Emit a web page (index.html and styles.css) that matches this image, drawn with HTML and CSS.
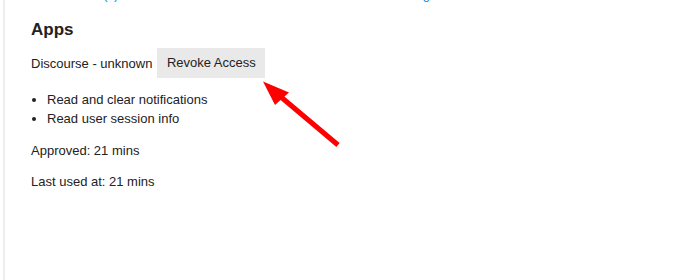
FILE: index.html
```html
<!DOCTYPE html>
<html>
<head>
<meta charset="utf-8">
<link rel="stylesheet" href="styles.css">
</head>
<body>
<div class="page">
  <div class="panel">
    <p class="intro"><a href="#">Linked client(s) that are authorized to access this account while using the site</a></p>
    <h2 class="title">Apps</h2>
    <div class="app-row">
      <span class="app-name">Discourse - unknown</span>
      <button class="btn">Revoke Access</button>
    </div>
    <ul class="scopes">
      <li>Read and clear notifications</li>
      <li>Read user session info</li>
    </ul>
    <p class="meta">Approved: 21 mins</p>
    <p class="meta">Last used at: 21 mins</p>
  </div>
  <svg class="arrow" width="100" height="80" viewBox="0 0 100 80">
    <line x1="85" y1="69" x2="28" y2="21" stroke="#ff0000" stroke-width="5"/>
    <polygon points="10,5.5 36,16.5 22,29" fill="#ff0000"/>
  </svg>
</div>
</body>
</html>
```
FILE: styles.css
```css
html, body {
  margin: 0;
  padding: 0;
  background: #fff;
}
body {
  font-family: "Liberation Sans", Arial, sans-serif;
  font-size: 13px;
  color: #222;
}
.page {
  position: relative;
  width: 690px;
  height: 280px;
  overflow: hidden;
}
.panel {
  margin-left: 3px;
  border-left: 2px solid #eeeeee;
  height: 280px;
  padding: 1px 0 0 26px;
  box-sizing: border-box;
}
.intro {
  margin: -14px 0 0;
  line-height: 16px;
  white-space: nowrap;
}
.intro a {
  color: #0a8bd6;
  text-decoration: none;
}
.title {
  margin: 17px 0 0;
  font-size: 17px;
  font-weight: bold;
  line-height: 20px;
}
.app-row {
  display: flex;
  align-items: center;
  gap: 5px;
  margin-top: 8px;
}
.btn {
  font-family: inherit;
  font-size: 13px;
  color: #222;
  background: #e9e9e9;
  border: none;
  padding: 7px 9.5px;
  line-height: 16px;
  height: 30px;
  margin: 0;
}
.scopes {
  margin: 13px 0 0;
  padding-left: 16px;
  line-height: 18.5px;
}
.meta {
  margin: 14px 0 0;
  line-height: 18px;
}
.meta + .meta {
  margin-top: 13px;
}
.arrow {
  position: absolute;
  left: 253px;
  top: 76px;
}
```
